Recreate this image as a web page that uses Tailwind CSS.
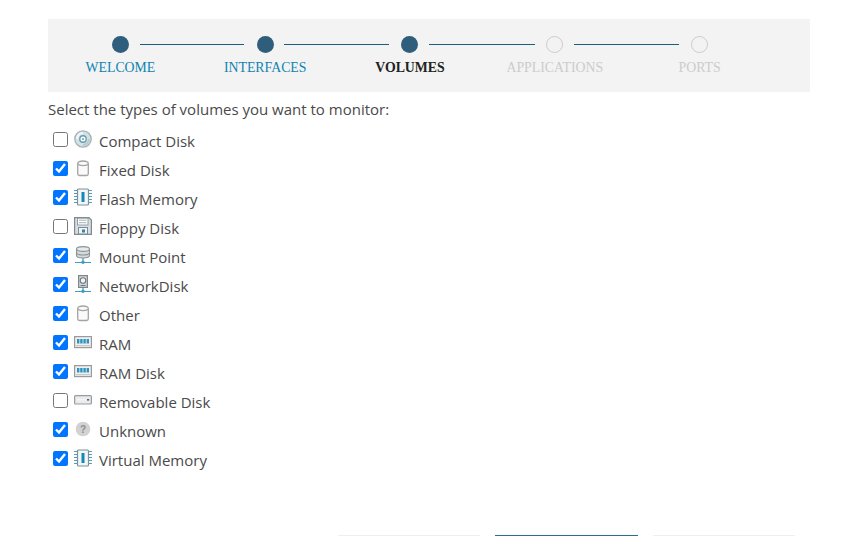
<!DOCTYPE html>
<html lang="en">
<head>
  <meta charset="UTF-8">
  <meta name="viewport" content="width=device-width, initial-scale=1.0">
  <title>Discovery wizard</title>
  <script src="https://cdn.jsdelivr.net/npm/@tailwindcss/browser@4"></script>
</head>
<body class="bg-white h-[536px] overflow-hidden font-['Open_Sans',sans-serif] text-[#4a4a4a]">
  <!-- icon defs -->
  <svg class="hidden">
    <symbol id="i-cd" viewBox="0 0 18 18">
      <circle cx="9" cy="9" r="8.200" fill="#d5e0e3" stroke="#a3b2b6" stroke-width="1.300"/>
      <path d="M3 9a6 6 0 0 1 6-6" fill="none" stroke="#f5f8f9" stroke-width="2"/>
      <path d="M15 9a6 6 0 0 1-6 6" fill="none" stroke="#b9cbd1" stroke-width="2"/>
      <circle cx="9" cy="9" r="3.200" fill="#fff" stroke="#5f9fb9" stroke-width="1.400"/>
      <circle cx="9" cy="9" r="1" fill="#8b979b"/>
    </symbol>
    <symbol id="i-disk" viewBox="0 0 18 18">
      <path d="M3.700 4.500v10.300q0 1.700 1.700 1.700h7.200q1.700 0 1.700-1.700V4.500" fill="#fafafa" stroke="#a4a4a4" stroke-width="1.300"/>
      <ellipse cx="9" cy="4.300" rx="5.300" ry="2.300" fill="#fafafa" stroke="#a4a4a4" stroke-width="1.300"/>
    </symbol>
    <symbol id="i-chip" viewBox="0 0 18 18">
      <path d="M0 2.500h4M0 5.500h4M0 8.500h4M0 11.500h4M0 14.500h4M14 2.500h4M14 5.500h4M14 8.500h4M14 11.500h4M14 14.500h4" stroke="#4f9fbd" stroke-width="1.200"/>
      <rect x="3.500" y="1" width="11" height="16" rx="1" fill="#f2f6f7" stroke="#7f9098" stroke-width="1.200"/>
      <rect x="7.500" y="4" width="3" height="10" fill="#1685b8"/>
    </symbol>
    <symbol id="i-floppy" viewBox="0 0 18 18">
      <path d="M.6.600h14.300l2.500 2.500v14.300H.6z" fill="#d8dfe2" stroke="#7f8b90" stroke-width="1.200"/>
      <rect x="3.500" y="1.200" width="10.500" height="6.800" fill="#fff" stroke="#8c979b" stroke-width=".9"/>
      <path d="M5 3.200h7.500M5 5.700h7.500" stroke="#a6b0b4" stroke-width="1"/>
      <rect x="4.500" y="10.500" width="9" height="6.500" fill="#eef3f5" stroke="#7f8b90" stroke-width="1"/>
      <rect x="8" y="12.500" width="3" height="3" fill="#2f87ae"/>
    </symbol>
    <symbol id="i-mount" viewBox="0 0 18 18">
      <path d="M2.500 3v6.500q0 2.500 6.500 2.500t6.500-2.500V3" fill="#d6dadb" stroke="#8c9497" stroke-width="1.100"/>
      <path d="M2.500 6.500q0 2.500 6.500 2.500t6.500-2.500" fill="none" stroke="#8c9497" stroke-width="1.100"/>
      <ellipse cx="9" cy="3" rx="6.500" ry="2.400" fill="#e8eaeb" stroke="#8c9497" stroke-width="1.100"/>
      <path d="M1 16.500h16M9 12v4.500" stroke="#3d9cc2" stroke-width="1.200"/>
      <circle cx="9" cy="16.300" r="1.700" fill="#3d9cc2"/>
    </symbol>
    <symbol id="i-net" viewBox="0 0 18 18">
      <rect x="4.600" y=".6" width="8.800" height="11.800" fill="#d4d8da" stroke="#7d8689" stroke-width="1.200"/>
      <circle cx="9" cy="5.500" r="2.800" fill="#f2f3f4" stroke="#6f787c" stroke-width="1.100"/>
      <path d="M6.500 10.500h5" stroke="#6f787c" stroke-width="1"/>
      <path d="M1 16.500h16M9 12.400v4" stroke="#3d9cc2" stroke-width="1.200"/>
      <circle cx="9" cy="16.300" r="1.700" fill="#3d9cc2"/>
    </symbol>
    <symbol id="i-ram" viewBox="0 0 18 18">
      <rect x=".6" y="3.600" width="16.800" height="11" fill="#eef0f1" stroke="#9a9a9a" stroke-width="1.200"/>
      <path d="M3 6h2.400v4.500H3zM6.200 6h2.400v4.500H6.200zM9.400 6h2.400v4.500H9.400zM12.600 6H15v4.500h-2.400z" fill="#2f93c0"/>
      <path d="M2.500 12.700h13" stroke="#a0a0a0" stroke-width="1.300" stroke-dasharray="1 1"/>
    </symbol>
    <symbol id="i-rem" viewBox="0 0 18 18">
      <rect x=".6" y="4.600" width="16.800" height="8.400" rx="1" fill="#e9ebec" stroke="#989da0" stroke-width="1.200"/>
      <path d="M3 8.800h9" stroke="#f8f8f8" stroke-width="1.200"/>
      <rect x="13" y="8" width="2.200" height="1.600" fill="#5f6468"/>
    </symbol>
    <symbol id="i-unk" viewBox="0 0 18 18">
      <circle cx="9" cy="9" r="7.300" fill="#d2d2d2"/>
      <text x="9" y="12.500" text-anchor="middle" font-size="10" font-weight="700" font-family="Liberation Sans" fill="#8e8e8e">?</text>
    </symbol>
  </svg>

  <div class="px-12 pt-[19px]">
    <!-- wizard steps -->
    <div class="w-[762px] h-[73px] bg-[#f3f3f3] pt-4 pr-[38px] grid grid-cols-5 font-['Liberation_Serif',serif] text-[13.8px]">
      <div class="relative flex flex-col items-center">
        <span class="w-[17px] h-[17px] my-px rounded-full bg-[#2f5d7c]"></span>
        <span class="mt-1 leading-5 text-[#0f83b0]">WELCOME</span>
        <span class="absolute left-[92px] top-[9px] w-[104px] h-px bg-[#1d5d80]"></span>
      </div>
      <div class="relative flex flex-col items-center">
        <span class="w-[17px] h-[17px] my-px rounded-full bg-[#2f5d7c]"></span>
        <span class="mt-1 leading-5 text-[#0f83b0]">INTERFACES</span>
        <span class="absolute left-[91px] top-[9px] w-[105px] h-px bg-[#1d5d80]"></span>
      </div>
      <div class="relative flex flex-col items-center">
        <span class="w-[17px] h-[17px] my-px rounded-full bg-[#2f5d7c]"></span>
        <span class="mt-1 leading-5 font-bold text-[#222]">VOLUMES</span>
        <span class="absolute left-[91px] top-[9px] w-[106px] h-px bg-[#1d5d80]"></span>
      </div>
      <div class="relative flex flex-col items-center">
        <span class="w-[17px] h-[17px] my-px rounded-full border border-[#ccc]"></span>
        <span class="mt-1 leading-5 text-[#ccc]">APPLICATIONS</span>
        <span class="absolute left-[92px] top-[9px] w-[105px] h-px bg-[#1d5d80]"></span>
      </div>
      <div class="relative flex flex-col items-center">
        <span class="w-[17px] h-[17px] my-px rounded-full border border-[#ccc]"></span>
        <span class="mt-1 leading-5 text-[#ccc]">PORTS</span>
      </div>
    </div>

    <p class="mt-[7px] text-[15px] leading-5">Select the types of volumes you want to monitor:</p>

    <!-- volume types -->
    <ul class="mt-[7px] pl-[5px] text-[15px]">
      <li class="h-[29px] flex items-center"><input type="checkbox" class="w-[15px] h-[15px] m-0 -mt-[3px]"><svg class="w-[18px] h-[18px] ml-1.5 -mt-[3px]"><use href="#i-cd"/></svg><span class="ml-[7px] mt-0.5">Compact Disk</span></li>
      <li class="h-[29px] flex items-center"><input type="checkbox" checked class="w-[15px] h-[15px] m-0 -mt-[3px]"><svg class="w-[18px] h-[18px] ml-1.5 -mt-[3px]"><use href="#i-disk"/></svg><span class="ml-[7px] mt-0.5">Fixed Disk</span></li>
      <li class="h-[29px] flex items-center"><input type="checkbox" checked class="w-[15px] h-[15px] m-0 -mt-[3px]"><svg class="w-[18px] h-[18px] ml-1.5 -mt-[3px]"><use href="#i-chip"/></svg><span class="ml-[7px] mt-0.5">Flash Memory</span></li>
      <li class="h-[29px] flex items-center"><input type="checkbox" class="w-[15px] h-[15px] m-0 -mt-[3px]"><svg class="w-[18px] h-[18px] ml-1.5 -mt-[3px]"><use href="#i-floppy"/></svg><span class="ml-[7px] mt-0.5">Floppy Disk</span></li>
      <li class="h-[29px] flex items-center"><input type="checkbox" checked class="w-[15px] h-[15px] m-0 -mt-[3px]"><svg class="w-[18px] h-[18px] ml-1.5 -mt-[3px]"><use href="#i-mount"/></svg><span class="ml-[7px] mt-0.5">Mount Point</span></li>
      <li class="h-[29px] flex items-center"><input type="checkbox" checked class="w-[15px] h-[15px] m-0 -mt-[3px]"><svg class="w-[18px] h-[18px] ml-1.5 -mt-[3px]"><use href="#i-net"/></svg><span class="ml-[7px] mt-0.5">NetworkDisk</span></li>
      <li class="h-[29px] flex items-center"><input type="checkbox" checked class="w-[15px] h-[15px] m-0 -mt-[3px]"><svg class="w-[18px] h-[18px] ml-1.5 -mt-[3px]"><use href="#i-disk"/></svg><span class="ml-[7px] mt-0.5">Other</span></li>
      <li class="h-[29px] flex items-center"><input type="checkbox" checked class="w-[15px] h-[15px] m-0 -mt-[3px]"><svg class="w-[18px] h-[18px] ml-1.5 -mt-[3px]"><use href="#i-ram"/></svg><span class="ml-[7px] mt-0.5">RAM</span></li>
      <li class="h-[29px] flex items-center"><input type="checkbox" checked class="w-[15px] h-[15px] m-0 -mt-[3px]"><svg class="w-[18px] h-[18px] ml-1.5 -mt-[3px]"><use href="#i-ram"/></svg><span class="ml-[7px] mt-0.5">RAM Disk</span></li>
      <li class="h-[29px] flex items-center"><input type="checkbox" class="w-[15px] h-[15px] m-0 -mt-[3px]"><svg class="w-[18px] h-[18px] ml-1.5 -mt-[3px]"><use href="#i-rem"/></svg><span class="ml-[7px] mt-0.5">Removable Disk</span></li>
      <li class="h-[29px] flex items-center"><input type="checkbox" checked class="w-[15px] h-[15px] m-0 -mt-[3px]"><svg class="w-[18px] h-[18px] ml-1.5 -mt-[3px]"><use href="#i-unk"/></svg><span class="ml-[7px] mt-0.5">Unknown</span></li>
      <li class="h-[29px] flex items-center"><input type="checkbox" checked class="w-[15px] h-[15px] m-0 -mt-[3px]"><svg class="w-[18px] h-[18px] ml-1.5 -mt-[3px]"><use href="#i-chip"/></svg><span class="ml-[7px] mt-0.5">Virtual Memory</span></li>
    </ul>

    <!-- footer buttons, only their top edge is in the window -->
    <div class="mt-[61px] ml-[290px] flex gap-[15px]">
      <div class="w-[142px] h-px bg-[#eee]"></div>
      <div class="w-[143px] h-px bg-[#2b6f8f]"></div>
      <div class="w-[142px] h-px bg-[#eee]"></div>
    </div>
  </div>
</body>
</html>
